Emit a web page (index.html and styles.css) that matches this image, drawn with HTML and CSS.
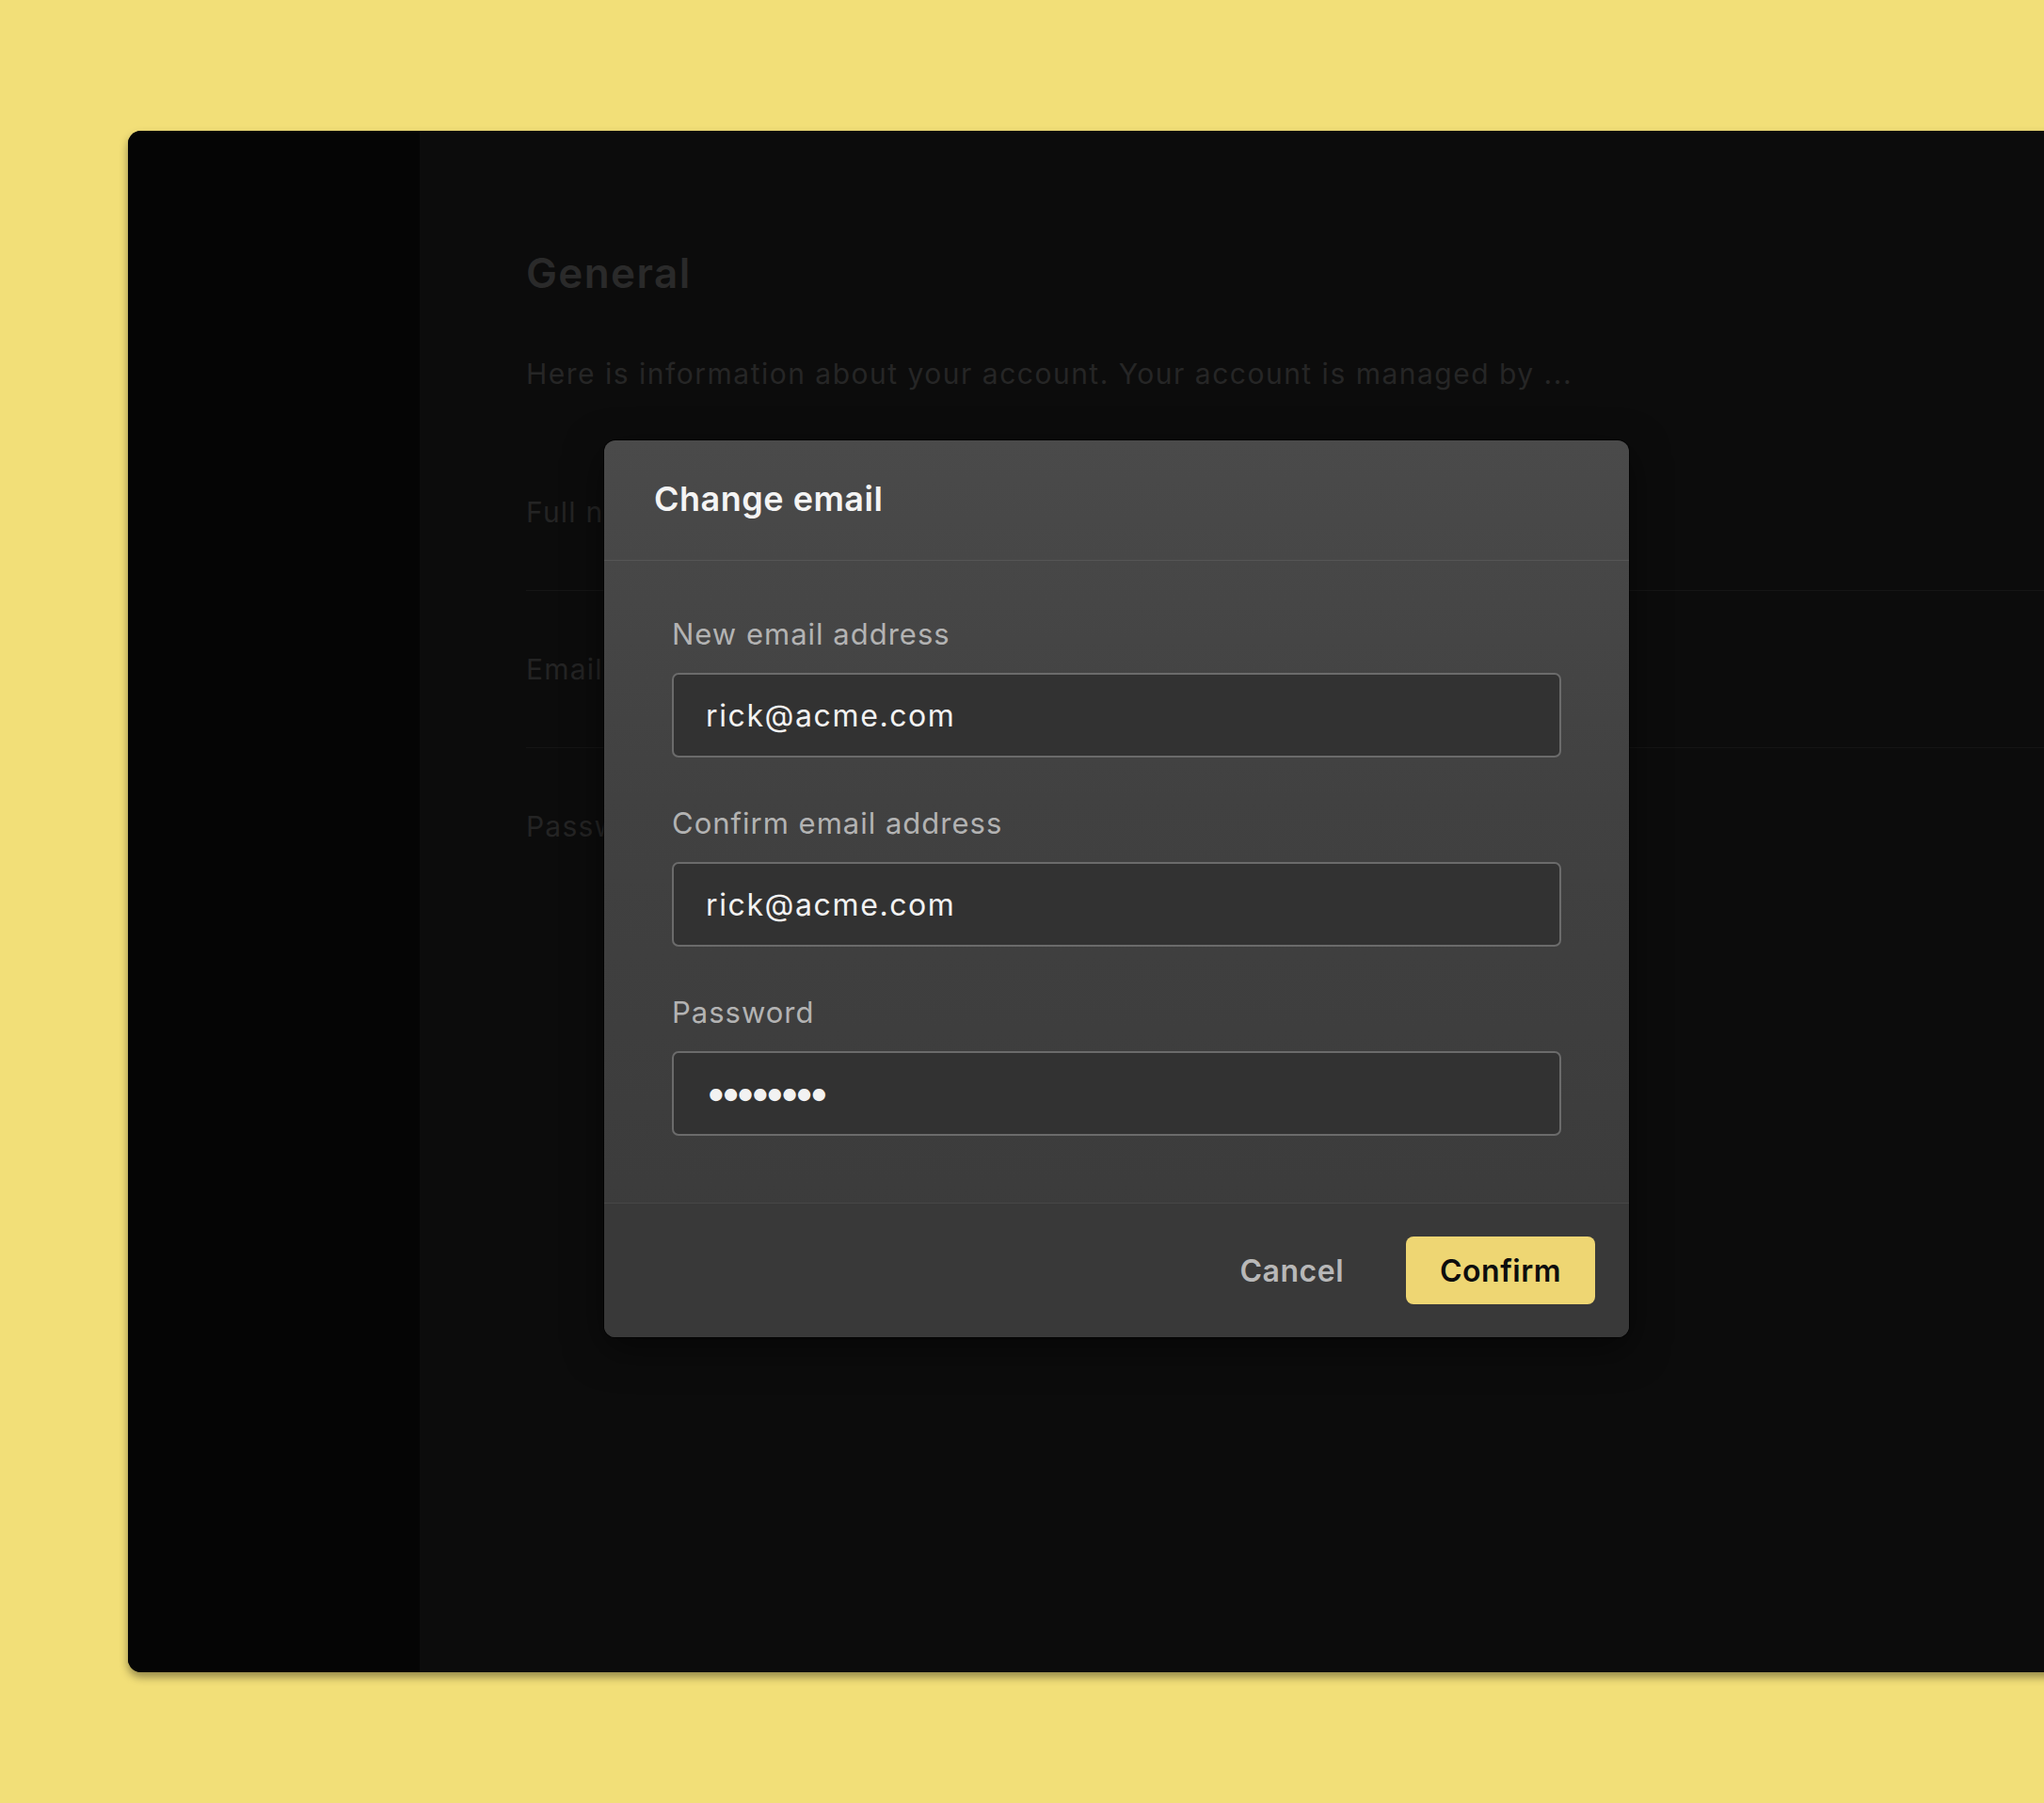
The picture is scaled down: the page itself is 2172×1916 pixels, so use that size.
FILE: index.html
```html
<!DOCTYPE html>
<html lang="en">

<head>
  <meta charset="UTF-8" />
  <meta name="viewport" content="width=device-width, initial-scale=1.0" />
  <title>Change email</title>
  <link rel="stylesheet" href="styles.css">
</head>

<body>
  <div class="stage">
    <div class="window">
      <aside class="sidebar"></aside>

      <main class="main">
        <h1 class="page-title">General</h1>
        <p class="page-desc">Here is information about your account. Your account is managed by ...</p>
        <div class="row">Full name</div>
        <div class="row">Email</div>
        <div class="row">Password</div>
      </main>

      <div class="modal">
        <div class="modal-header">
          <h2 class="modal-title">Change email</h2>
        </div>
        <form class="modal-body">
          <label class="field">
            <span class="field-label">New email address</span>
            <input class="field-input" type="text" value="rick@acme.com">
          </label>
          <label class="field">
            <span class="field-label">Confirm email address</span>
            <input class="field-input" type="text" value="rick@acme.com">
          </label>
          <label class="field">
            <span class="field-label">Password</span>
            <input class="field-input password" type="password" value="password">
          </label>
        </form>
        <div class="modal-footer">
          <button class="btn btn-cancel">Cancel</button>
          <button class="btn btn-confirm">Confirm</button>
        </div>
      </div>
    </div>
  </div>
</body>

</html>
```

FILE: styles.css
```css
body {
  margin: 0;
  padding: 0;
  background-color: #f2df78;
  font-family: Inter, "Noto Sans", sans-serif;
  overflow: hidden;
}

.stage {
  height: 1916px;
  padding: 139px 0 0 136px;
  box-sizing: border-box;
}

/* окно приложения, уходит за правый край */
.window {
  position: relative;
  display: flex;
  width: 2200px;
  height: 1638px;
  border-radius: 14px;
  background-color: #0c0c0c;
  box-shadow: 0 5px 10px rgba(0, 0, 0, 0.4);
  overflow: hidden;
}

.sidebar {
  width: 310px;
  flex-shrink: 0;
  background-color: #050505;
}

.main {
  flex: 1;
  padding: 125px 0 0 113px;
}

.page-title {
  margin: 0;
  font-size: 44px;
  line-height: 53px;
  font-weight: 600;
  letter-spacing: 1.4px;
  color: #2a2a2a;
}

.page-desc {
  margin: 63px 0 47px;
  font-size: 30px;
  line-height: 34px;
  letter-spacing: 1.5px;
  color: #262626;
}

.row {
  padding: 65px 0;
  font-size: 30px;
  line-height: 36px;
  letter-spacing: 1.2px;
  color: #242424;
  border-bottom: 1px solid #151515;
}

.row:last-child {
  border-bottom: none;
}

/* модальное окно */
.modal {
  position: absolute;
  left: 506px;
  top: 329px;
  width: 1089px;
  border-radius: 12px;
  background: linear-gradient(180deg, #4a4a4a 0%, #414141 40%, #3a3a3a 100%);
  box-shadow: 0 0 0 1px rgba(0, 0, 0, 0.6), 0 12px 40px rgba(0, 0, 0, 0.5);
  overflow: hidden;
}

.modal-header {
  padding: 40px 53px 43px;
  border-bottom: 1px solid #555555;
}

.modal-title {
  margin: 0;
  font-size: 36px;
  line-height: 44px;
  font-weight: 600;
  letter-spacing: 0.5px;
  color: #f4f4f4;
}

.modal-body {
  display: flex;
  flex-direction: column;
  gap: 52px;
  margin: 0;
  padding: 60px 72px 71px;
}

.field {
  display: flex;
  flex-direction: column;
  gap: 23px;
}

.field-label {
  font-size: 31px;
  line-height: 36px;
  letter-spacing: 1px;
  color: #b3b3b3;
}

.field-input {
  height: 90px;
  box-sizing: border-box;
  padding: 0 34px;
  border: 2px solid #6b6b6b;
  border-radius: 7px;
  background-color: #323232;
  font-family: Inter, "Noto Sans", sans-serif;
  font-size: 32px;
  letter-spacing: 1.6px;
  color: #f2f2f2;
  outline: none;
}

/* точки пароля крупнее и плотнее */
.password {
  padding: 0 33px 4px;
  font-size: 42px;
  letter-spacing: -8px;
}

.modal-footer {
  display: flex;
  justify-content: flex-end;
  align-items: center;
  gap: 66px;
  height: 142px;
  padding: 0 36px;
  border-top: 1px solid #464646;
  background-color: #393939;
}

.btn {
  border: none;
  font-family: Inter, "Noto Sans", sans-serif;
  font-size: 32px;
  font-weight: 600;
  letter-spacing: 0.5px;
  cursor: pointer;
}

.btn-cancel {
  padding: 0;
  background: none;
  color: #b8b8b8;
}

.btn-confirm {
  width: 201px;
  height: 72px;
  border-radius: 8px;
  background-color: #eed673;
  color: #0d0d0d;
}

.btn-confirm:hover {
  background-color: #e6cc62;
}
```
